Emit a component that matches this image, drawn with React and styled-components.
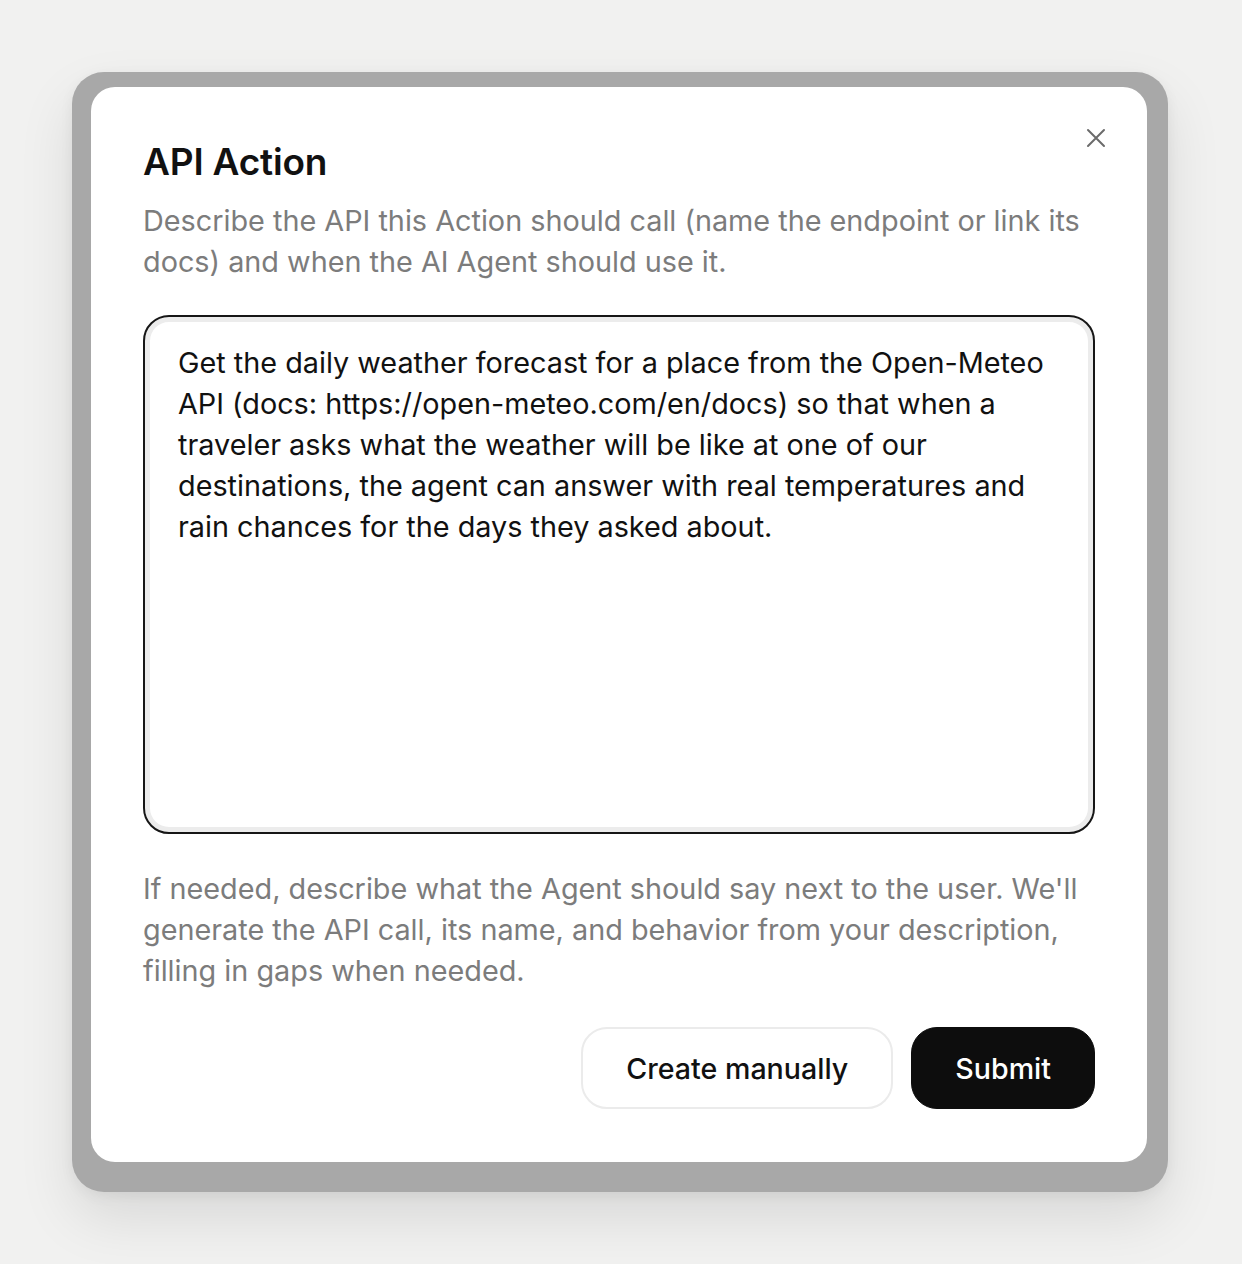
import React from 'react';
import styled, { createGlobalStyle } from 'styled-components';

const GlobalStyle = createGlobalStyle`
  body {
    margin: 0;
    background: #f1f1f0;
    font-family: Inter, "Noto Sans", sans-serif;
    -webkit-font-smoothing: antialiased;
  }
`;

const Page = styled.div`
  padding: 72px 0 72px 72px;
`;

const Backdrop = styled.div`
  width: 1096px;
  box-sizing: border-box;
  padding: 15px 21px 30px 19px;
  border-radius: 32px;
  background: #a8a8a8;
  box-shadow: 0 26px 56px rgba(0, 0, 0, 0.1), 0 4px 14px rgba(0, 0, 0, 0.06);
`;

const Dialog = styled.div`
  position: relative;
  display: flex;
  flex-direction: column;
  height: 1075px;
  box-sizing: border-box;
  padding: 51px 52px 53px;
  border-radius: 24px;
  background: #ffffff;
`;

const CloseButton = styled.button`
  position: absolute;
  top: 37px;
  right: 37px;
  display: flex;
  align-items: center;
  justify-content: center;
  width: 28px;
  height: 28px;
  padding: 0;
  border: 0;
  background: none;
  color: #6b6b6b;
  cursor: pointer;
`;

const Title = styled.h2`
  margin: 0;
  font-size: 37px;
  line-height: 48px;
  font-weight: 600;
  color: #111111;
  letter-spacing: -0.2px;
`;

const Hint = styled.p`
  margin: ${p => p.$top || 0}px 0 0;
  font-size: 28.8px;
  line-height: 41px;
  color: #7c7c7c;
`;

const Prompt = styled.textarea`
  display: block;
  width: 100%;
  height: 519px;
  box-sizing: border-box;
  margin-top: 33px;
  padding: 25px 33px;
  border: 2px solid #161616;
  border-radius: 26px;
  box-shadow: inset 0 0 0 5px #ececec;
  background: #ffffff;
  font-family: inherit;
  font-size: 28.8px;
  line-height: 41px;
  color: #111111;
  resize: none;
  outline: none;
`;

const Actions = styled.div`
  display: flex;
  justify-content: flex-end;
  gap: 18px;
  margin-top: auto;
`;

const Button = styled.button`
  height: 82px;
  padding: 0 43px;
  border-radius: 26px;
  font-family: inherit;
  font-size: 28.6px;
  font-weight: 500;
  cursor: pointer;
  border: ${p => (p.$primary ? '1px solid #0d0d0d' : '2px solid #ebebeb')};
  background: ${p => (p.$primary ? '#0d0d0d' : '#ffffff')};
  color: ${p => (p.$primary ? '#ffffff' : '#111111')};
`;

const promptText =
  'Get the daily weather forecast for a place from the Open-Meteo API (docs: https://open-meteo.com/en/docs) so that when a traveler asks what the weather will be like at one of our destinations, the agent can answer with real temperatures and rain chances for the days they asked about.';

const App = () => (
  <>
    <GlobalStyle />
    <Page>
      <Backdrop>
        <Dialog>
          <CloseButton aria-label="Close">
            <svg width="24" height="24" viewBox="0 0 24 24" fill="none" stroke="currentColor" strokeWidth="2" strokeLinecap="round">
              <path d="M4 4l16 16M20 4L4 20" />
            </svg>
          </CloseButton>
          <Title>API Action</Title>
          <Hint $top={14}>
            Describe the API this Action should call (name the endpoint or link its docs) and when the AI Agent should use it.
          </Hint>
          <Prompt defaultValue={promptText} />
          <Hint $top={34}>
            If needed, describe what the Agent should say next to the user. We'll generate the API call, its name, and behavior from your description, filling in gaps when needed.
          </Hint>
          <Actions>
            <Button>Create manually</Button>
            <Button $primary>Submit</Button>
          </Actions>
        </Dialog>
      </Backdrop>
    </Page>
  </>
);

export default App;
